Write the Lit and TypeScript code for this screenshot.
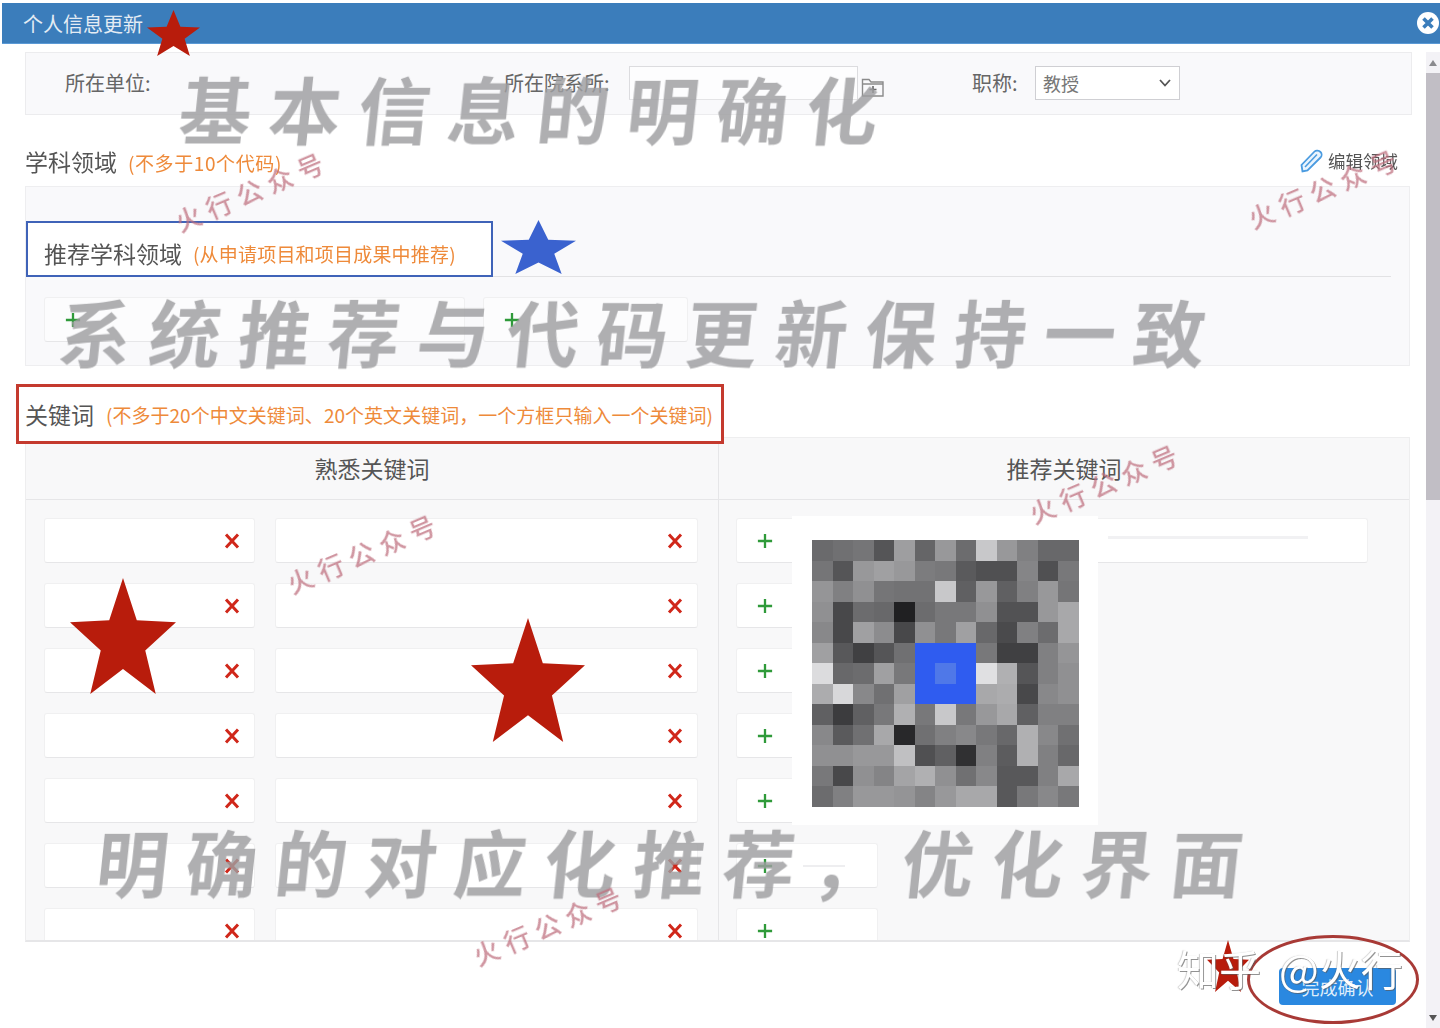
import { LitElement, html, css, svg } from "lit";
import { customElement } from "lit/decorators.js";
import { styleMap } from "lit/directives/style-map.js";

const B = "b", L = "l";
const MOSAIC: (number | string)[][] = [
  [0x6a,0x70,0x75,0x55,0x9e,0x65,0x98,0x6c,0xc8,0x98,0x80,0x68,0x68],
  [0x75,0x55,0x98,0xa0,0x98,0x7c,0x78,0x5a,0x50,0x50,0x85,0x50,0x78],
  [0x95,0x80,0x90,0x75,0x72,0x72,0xc8,0x60,0x98,0x60,0x80,0x98,0x75],
  [0x90,0x48,0x6c,0x68,0x20,0x6c,0x78,0x78,0x90,0x52,0x52,0x98,0xa8],
  [0x88,0x48,0xa0,0x8c,0x48,0x90,0x78,0xa0,0x68,0x4a,0x80,0x6c,0xa8],
  [0xa0,0x58,0x40,0x55,0x70,B,B,B,0x78,0x40,0x40,0x80,0x95],
  [0xdc,0x68,0x6c,0xa0,0x78,B,L,B,0xe0,0xb0,0x55,0x80,0x90],
  [0xac,0xd8,0x88,0x70,0xa0,B,B,B,0xa8,0xac,0x48,0x88,0x90],
  [0x60,0x3c,0x60,0x78,0xb0,0x78,0xc8,0x78,0x98,0xa8,0x60,0x80,0x80],
  [0x88,0x5a,0x70,0xa8,0x28,0x70,0x80,0x88,0x78,0x68,0xb0,0x88,0x70],
  [0x90,0x90,0x98,0x98,0xc0,0x50,0x60,0x30,0x80,0x5c,0xb0,0x80,0x68],
  [0x78,0x48,0x90,0x84,0xa4,0xb0,0x90,0x70,0x88,0x58,0x58,0x80,0xa8],
  [0x6c,0x80,0x98,0x98,0x94,0x84,0x98,0xa8,0xa8,0x58,0x78,0x88,0x78],
];

const STARS = [
  { x: 147, y: 10, w: 53, h: 46, c: "#b81c0c" },
  { x: 501, y: 220, w: 75, h: 54, c: "#3a62cf" },
  { x: 70, y: 578, w: 106, h: 116, c: "#b81c0c" },
  { x: 471, y: 618, w: 114, h: 124, c: "#b81c0c" },
  { x: 1207, y: 940, w: 42, h: 52, c: "#b81c0c" },
];
const STAMPS = [
  { x: 252, y: 190 }, { x: 1325, y: 187 }, { x: 1106, y: 482 }, { x: 364, y: 552 }, { x: 550, y: 924 },
];

const cross = html`<svg class="ic" viewBox="0 0 16 16"><path d="M2 1.5 14 14.5M14 1.5 2 14.5" stroke="#d0271a" stroke-width="3" fill="none"/></svg>`;
const plus = html`<svg class="ic" viewBox="0 0 18 18"><path d="M9 1V17M1 9H17" stroke="#2f9a3a" stroke-width="2.6" fill="none"/></svg>`;

@customElement("app-root")
export class AppRoot extends LitElement {
  static styles = css`
    :host { display: block; }
    * { box-sizing: border-box; }
    .root {
      position: relative; width: 1440px; height: 1028px; overflow: hidden; background: #fff;
      font-family: "Noto Sans CJK SC", "Noto Sans", sans-serif; color: #555; font-size: 18px;
    }
    .soft { height: 100%; display: flex; flex-direction: column; filter: blur(0.45px); }
    .header {
      margin: 3px 0 0 2px; height: 41px; flex: none; background: #3b7dbb; border-bottom: 1px solid #5b9ad6;
      color: #e4ecf4; font-size: 20px; display: flex; align-items: center; justify-content: space-between;
      padding: 0 0 0 21px;
    }
    .close { width: 24px; height: 24px; display: block; }
    .main { flex: 1; display: flex; min-height: 0; }
    .content { width: 1426px; padding: 8px 0 0 25px; display: flex; flex-direction: column; }
    .info {
      width: 1387px; height: 63px; flex: none; background: #f9f9fb; border: 1px solid #ececee;
      display: flex; align-items: flex-start; padding: 13px 0 0 39px;
    }
    .lab { line-height: 34px; color: #666; font-size: 20px; }
    .u1 { width: 439px; }
    .u2 { width: 125px; }
    .field { background: #fdfdfe; border: 1px solid #dcdcdf; height: 34px; }
    .f1 { width: 229px; border-bottom-color: #e4e4e6; }
    .folder { width: 24px; height: 22px; margin: 10px 0 0 3px; }
    .u3 { margin-left: 87px; width: 63px; }
    .select {
      width: 145px; background: #fff; border: 1px solid #cfcfd3; display: flex; align-items: center;
      justify-content: space-between; padding: 0 7px 0 7px; color: #777; font-size: 18px;
    }
    .select svg { width: 14px; height: 10px; }
    .sec { height: 71px; flex: none; width: 1373px; display: flex; justify-content: space-between; align-items: flex-end; padding-bottom: 7px; }
    .t { font-size: 23px; line-height: 32px; color: #555; }
    .hint { font-size: 19px; color: #ee8a3a; margin-left: 11px; }
    .h1 { letter-spacing: 0.6px; }
    .h2 { letter-spacing: 0.2px; }
    .edit { display: flex; align-items: center; font-size: 17.5px; color: #555; line-height: 30px; margin-bottom: 3px; }
    .edit svg { width: 24px; height: 24px; margin-right: 5px; }
    .panel { width: 1385px; height: 180px; flex: none; background: #f9f9fb; border: 1px solid #eeeef0; padding-top: 34px; }
    .rec { width: 1365px; height: 56px; border-bottom: 1px solid #e2e2e4; }
    .recbox {
      width: 467px; height: 56px; background: #fff; border: 2px solid #3f63b8; padding: 0 0 0 16px;
      display: flex; align-items: center;
    }
    .recbox .t, .recbox .hint { position: relative; top: 4px; }
    .items { display: flex; gap: 18px; padding: 20px 0 0 18px; }
    .inp {
      height: 45px; background: #fff; border: 1px solid #f0f0f1; border-bottom-color: #e6e6e8; border-radius: 3px;
      display: flex; align-items: center; flex: none;
    }
    .panel .inp { background: #fcfcfd; padding-left: 20px; }
    .ic { width: 16px; height: 16px; display: block; flex: none; }
    .i1 { width: 421px; }
    .i2 { width: 205px; }
    .kw {
      position: relative; z-index: 1; flex: none; width: 708px; height: 60px; margin: 18px 0 -7px -9px;
      border: 3px solid #c43a2e; background: #fff; display: flex; align-items: center; padding: 0 0 0 6px;
    }
    .kw .hint { margin-left: 12px; letter-spacing: 0.03px; }
    .table {
      width: 1385px; height: 505px; flex: none; background: #f8f8f9; border: 1px solid #eeeeef; border-bottom: 2px solid #e6e6e8;
      display: grid; grid-template-columns: 692px 1fr; overflow: hidden;
    }
    .col + .col { border-left: 1px solid #e6e6e8; }
    .head { height: 62px; border-bottom: 1px solid #e6e6e8; text-align: center; font-size: 23px; line-height: 60px; color: #555; }
    .rows { padding: 18px 0 0 18px; display: grid; row-gap: 20px; }
    .col + .col .rows { padding-left: 17px; }
    .left { grid-template-columns: 211px 423px; column-gap: 20px; }
    .right { grid-template-columns: 142px 471px; column-gap: 19px; justify-content: start; }
    .left .inp { justify-content: flex-end; padding-right: 14px; }
    .right .inp { padding-left: 20px; }
    .streak { height: 2px; width: 42px; margin-left: 30px; background: #eeeef0; }
    .far { padding-left: 210px !important; }
    .far .streak { width: 200px; margin: 0 0 6px; height: 3px; background: #f1f1f3; }
    .foot { flex: 1; display: flex; justify-content: flex-end; align-items: flex-start; padding: 26px 15px 0 0; width: 1386px; }
    .btn {
      width: 117px; height: 37px; background: #2a88e0; color: #dfeefb; border-radius: 4px; font-size: 18px;
      display: flex; align-items: center; justify-content: center;
    }
    .scroll { width: 14px; background: #f3f2f6; margin-top: 8px; display: flex; flex-direction: column; align-items: center; }
    .arrow { width: 10px; height: 21px; flex: none; display: flex; align-items: center; justify-content: center; }
    .thumb { width: 14px; height: 427px; background: #c1bec5; flex: none; }
    .sp { flex: 1; }
    .star { position: absolute; }
    .big {
      position: absolute; white-space: nowrap; font-size: 72px; font-weight: 700; line-height: 80px; letter-spacing: 17.5px;
      color: rgba(158,158,160,0.82); transform: skewX(-6deg); filter: blur(0.5px);
    }
    .b1 { left: 180px; top: 68px; }
    .b2 { left: 60px; top: 291px; }
    .b3 { left: 97px; top: 821px; }
    .stamp {
      position: absolute; white-space: nowrap; font-size: 26px; font-weight: 500; letter-spacing: 7px; color: rgba(190,110,125,0.72);
      transform: translate(-50%, -50%) rotate(-23deg);
    }
    .cover { position: absolute; left: 792px; top: 516px; width: 306px; height: 309px; background: #fff; padding: 24px 20px 0; }
    .mosaic { width: 267px; height: 267px; display: grid; grid-template-columns: repeat(13, 1fr); grid-template-rows: repeat(13, 1fr); }
    .ring { position: absolute; left: 1247px; top: 935px; width: 172px; height: 89px; border: 3px solid #a83a36; border-radius: 50%; }
    .zhihu {
      position: absolute; left: 1177px; top: 940px; white-space: nowrap; font-size: 42px; line-height: 56px; color: #fff;
      text-shadow: 1px 1px 0 rgba(90,90,90,.65), -1px 0 1px rgba(90,90,90,.3);
    }
    .zhihu span { margin-left: 18px; }
  `;

  private starPts() {
    const pts: string[] = [];
    for (let i = 0; i < 10; i++) {
      const r = i % 2 ? 0.42 : 1;
      const a = -Math.PI / 2 + (i * Math.PI) / 5;
      const x = 50 + 50 * (r * Math.cos(a)) / 0.951;
      const y = (r * Math.sin(a) + 1) / 1.809 * 100;
      pts.push(`${x.toFixed(1)},${y.toFixed(1)}`);
    }
    return pts.join(" ");
  }

  private leftRows() {
    return Array.from({ length: 7 }, () => html`
      <div class="inp">${cross}</div><div class="inp">${cross}</div>`);
  }

  private rightRows() {
    return Array.from({ length: 7 }, (_, i) => html`
      <div class="inp">${plus}${i === 5 ? html`<div class="streak"></div>` : ""}</div>
      ${i === 0 ? html`<div class="inp far"><div class="streak"></div></div>` : html`<div></div>`}`);
  }

  render() {
    const pts = this.starPts();
    return html`
      <div class="root">
        <div class="soft">
          <div class="header">
            <span>个人信息更新</span>
            <svg class="close" viewBox="0 0 24 24">
              <circle cx="12" cy="12" r="11" fill="#fff"/>
              <path d="M7.5 7.5 16.5 16.5M16.5 7.5 7.5 16.5" stroke="#3b7dbb" stroke-width="3.6" fill="none"/>
            </svg>
          </div>
          <div class="main">
            <div class="content">
              <div class="info">
                <div class="lab u1">所在单位:</div>
                <div class="lab u2">所在院系所:</div>
                <div class="field f1"></div>
                <svg class="folder" viewBox="0 0 24 22">
                  <path d="M1.5 20V3.5H8L10 6H22V20ZM1.5 8H22" fill="none" stroke="#8b8b8b" stroke-width="1.4"/>
                  <path d="M12 10V17M8.5 13.500H15.500" stroke="#666" stroke-width="1.6" fill="none"/>
                </svg>
                <div class="lab u3">职称:</div>
                <div class="field select">
                  <span>教授</span>
                  <svg viewBox="0 0 14 10"><path d="M2 2 7 7.500 12 2" stroke="#555" stroke-width="1.8" fill="none"/></svg>
                </div>
              </div>
              <div class="sec">
                <div class="t">学科领域<span class="hint h1">(不多于10个代码)</span></div>
                <div class="edit">
                  <svg viewBox="0 0 24 24">
                    <path d="M3.500 22.500 2.500 16 15.500 2.500C17 1 20 1.500 21.500 3S23 7 21.500 8.500L8.500 21.500Z" fill="#eaf4fd" stroke="#4a9be0" stroke-width="1.8"/>
                    <path d="M6 18 18 5.500" stroke="#4a9be0" stroke-width="1.600" fill="none"/>
                  </svg>
                  编辑领域
                </div>
              </div>
              <div class="panel">
                <div class="rec">
                  <div class="recbox">
                    <span class="t">推荐学科领域</span><span class="hint h2">(从申请项目和项目成果中推荐)</span>
                  </div>
                </div>
                <div class="items">
                  <div class="inp i1">${plus}</div>
                  <div class="inp i2">${plus}</div>
                </div>
              </div>
              <div class="kw">
                <span class="t">关键词</span><span class="hint">(不多于20个中文关键词、20个英文关键词，一个方框只输入一个关键词)</span>
              </div>
              <div class="table">
                <div class="col">
                  <div class="head">熟悉关键词</div>
                  <div class="rows left">${this.leftRows()}</div>
                </div>
                <div class="col">
                  <div class="head">推荐关键词</div>
                  <div class="rows right">${this.rightRows()}</div>
                </div>
              </div>
              <div class="foot"><div class="btn">完成确认</div></div>
            </div>
            <div class="scroll">
              <div class="arrow"><svg width="8" height="6" viewBox="0 0 8 6"><path d="M4 0 8 6H0Z" fill="#8a8a8e"/></svg></div>
              <div class="thumb"></div>
              <div class="sp"></div>
              <div class="arrow"><svg width="8" height="6" viewBox="0 0 8 6"><path d="M0 0H8L4 6Z" fill="#555"/></svg></div>
            </div>
          </div>
        </div>

        <div class="cover">
          <div class="mosaic">
            ${MOSAIC.flat().map((v) => {
              const bg = v === B ? "#2f5cf0" : v === L ? "#4f78e8" : `rgb(${v},${v},${(v as number) + 2})`;
              return html`<div style=${styleMap({ background: bg })}></div>`;
            })}
          </div>
        </div>

        <div class="big b1">基本信息的明确化</div>
        <div class="big b2">系统推荐与代码更新保持一致</div>
        <div class="big b3">明确的对应化推荐，优化界面</div>

        ${STAMPS.map((s) => html`<div class="stamp" style=${styleMap({ left: s.x + "px", top: s.y + "px" })}>火行公众号</div>`)}

        ${STARS.map((s) => html`
          <svg class="star" viewBox="0 0 100 100" preserveAspectRatio="none"
            style=${styleMap({ left: s.x + "px", top: s.y + "px", width: s.w + "px", height: s.h + "px" })}>
            ${svg`<polygon points=${pts} fill=${s.c}></polygon>`}
          </svg>`)}

        <div class="ring"></div>
        <div class="zhihu">知乎<span>@火行</span></div>
      </div>
    `;
  }
}
